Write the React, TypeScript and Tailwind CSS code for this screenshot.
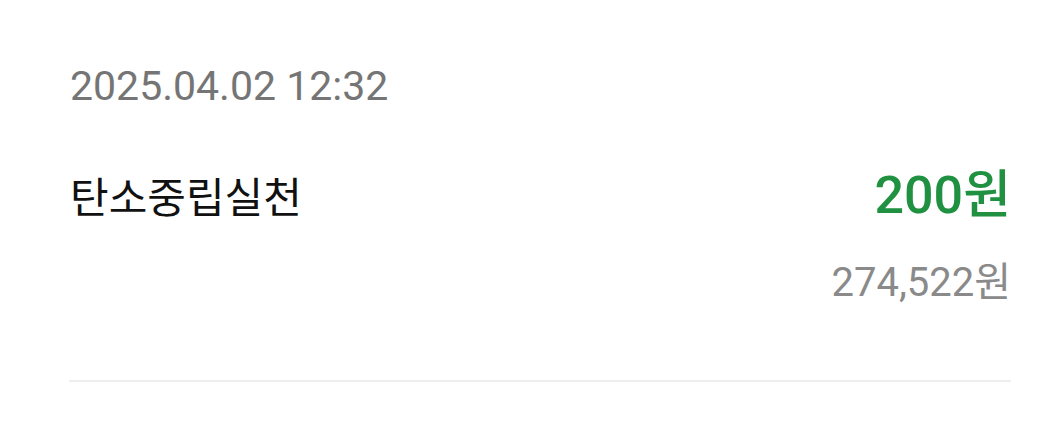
import React from "react";

export default function App() {
  return (
    <div
      className="w-[1042px] h-[433px] bg-white"
      style={{ fontFamily: "Roboto, 'Noto Sans CJK KR', sans-serif" }}
    >
      <div className="pl-[69px] pr-[31px] pt-[62px]">
        <div className="pl-px text-[41px] leading-[48px] text-[#757575]">2025.04.02 12:32</div>
        <div className="mt-[56px] flex items-baseline justify-between">
          <div className="pl-px text-[42px] leading-[60px] text-[#111111]">탄소중립실천</div>
          <div className="text-[52px] leading-[60px] font-medium text-[#1f9140]">200원</div>
        </div>
        <div className="mt-[30px] text-right text-[40px] leading-[48px] text-[#8a8a8a]">274,522원</div>
        <div className="mt-[73px] h-[2px] bg-[#eeeeee]" />
      </div>
    </div>
  );
}
